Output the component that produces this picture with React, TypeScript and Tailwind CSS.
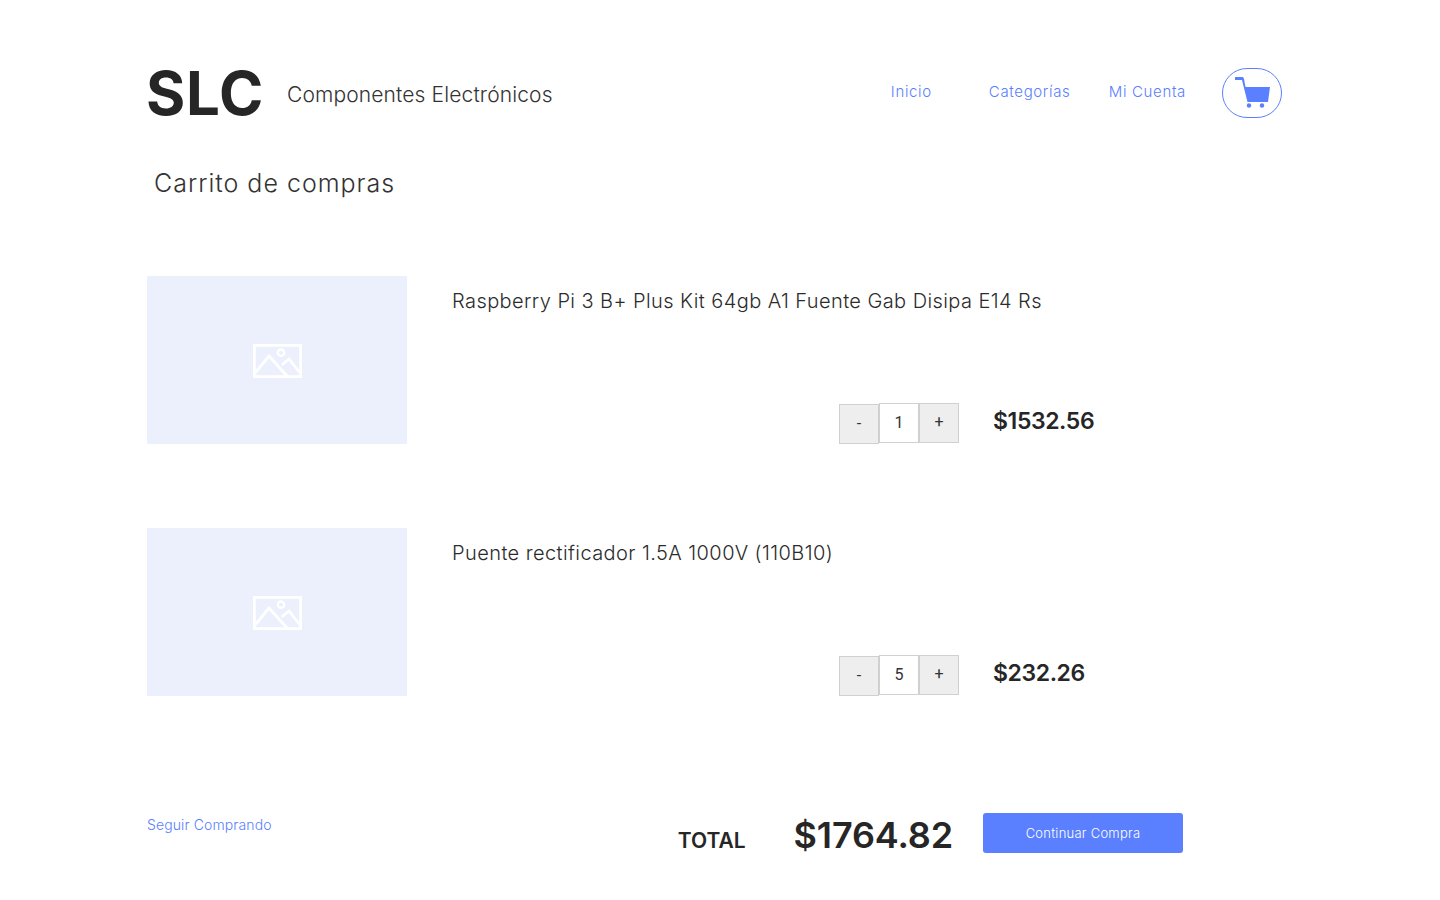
import React from "react";

type CartItem = {
  name: string;
  qty: number;
  price: string;
};

const items: CartItem[] = [
  { name: "Raspberry Pi 3 B+ Plus Kit 64gb A1 Fuente Gab Disipa E14 Rs", qty: 1, price: "$1532.56" },
  { name: "Puente rectificador 1.5A 1000V (110B10)", qty: 5, price: "$232.26" },
];

function CartIcon() {
  return (
    <svg width="38" height="34" viewBox="0 0 38 34" fill="#5a7fff">
      <path d="M2 1h8l1 2 1.500 8H37l-2 15H14.500L9 4H2z" />
      <circle cx="16" cy="29.500" r="2.200" />
      <circle cx="29" cy="29.500" r="2.200" />
    </svg>
  );
}

function PictureIcon() {
  return (
    <svg width="49" height="34" viewBox="0 0 49 34" fill="none" stroke="#ffffff">
      <rect x="1.400" y="1.400" width="46.200" height="31.200" strokeWidth="2.800" />
      <circle cx="28" cy="8.700" r="3.200" strokeWidth="2.400" />
      <path d="M2 29 16 12 34 32" strokeWidth="2.800" />
      <path d="M28.700 21 36 15 47 29" strokeWidth="2.800" />
    </svg>
  );
}

function QtyControl({ qty }: { qty: number }) {
  return (
    <div className="flex items-start font-['Roboto',sans-serif] text-[16px] text-[#333333]">
      <button className="mt-px flex h-10 w-10 items-center justify-center border border-[#d0d0d0] bg-[#eeeeee]">-</button>
      <div className="flex h-10 w-10 items-center justify-center border border-[#d0d0d0] bg-white">{qty}</div>
      <button className="flex h-10 w-10 items-center justify-center border border-[#d0d0d0] bg-[#eeeeee] pb-[2px]">+</button>
    </div>
  );
}

function CartRow({ item }: { item: CartItem }) {
  return (
    <div className="flex h-[168px]">
      <div className="flex h-[168px] w-[260px] items-center justify-center bg-[#ecf0fd] pt-[2px] pl-[1px]">
        <PictureIcon />
      </div>
      <div className="ml-[45px] flex flex-col">
        <p className="mt-[12px] h-[26px] text-[20px] leading-[26px] font-light tracking-[0.42px] whitespace-nowrap text-[#2b2b2b]">
          {item.name}
        </p>
        <div className="mt-[89px] ml-[387px] flex">
          <QtyControl qty={item.qty} />
          <span className="mt-[2px] ml-[34px] text-[23px] leading-[32px] font-semibold tracking-[-0.4px] text-[#262626]">{item.price}</span>
        </div>
      </div>
    </div>
  );
}

export default function App() {
  return (
    <div className="min-h-[900px] bg-white pt-[68px] pl-[147px] font-['Inter',sans-serif]">
      <header className="flex h-[50px] w-[1135px] items-center">
        <h1 className="-ml-px text-[60px] leading-[50px] font-bold tracking-[0.7px] text-[#262626]">SLC</h1>
        <span className="mt-[4px] ml-[23px] text-[21px] font-light tracking-[0.13px] text-[#333333]">Componentes Electrónicos</span>
        <nav className="mb-[2px] ml-auto flex text-[15px] font-light tracking-[0.65px] text-[#5a7fff]">
          <a className="w-[98px]">Inicio</a>
          <a className="w-[120px]">Categorías</a>
          <a>Mi Cuenta</a>
        </nav>
        <div className="ml-[36px] flex h-[50px] w-[60px] items-center justify-center rounded-[25px] border border-[#5a7fff]">
          <CartIcon />
        </div>
      </header>

      <h2 className="mt-[48px] ml-[7px] text-[25px] leading-[34px] font-light tracking-[1px] text-[#333333]">Carrito de compras</h2>

      <div className="mt-[76px] flex flex-col gap-[84px]">
        {items.map((item) => (
          <CartRow key={item.name} item={item} />
        ))}
      </div>

      <footer className="mt-[117px] flex h-[40px] w-[1036px]">
        <a className="mt-[3px] text-[14px] leading-[18px] font-light tracking-[0.12px] text-[#5a7fff]">Seguir Comprando</a>
        <div className="ml-auto flex">
          <span className="mt-[16px] text-[21px] leading-[24px] font-semibold text-[#262626]">TOTAL</span>
          <span className="mt-[1px] ml-[48px] text-[36px] leading-[42px] font-semibold tracking-[-0.15px] text-[#262626]">$1764.82</span>
          <button className="ml-[30px] h-10 w-[200px] rounded-[3px] bg-[#5a7fff] pt-[2px] text-[13px] font-light tracking-[0.25px] text-white">Continuar Compra</button>
        </div>
      </footer>
    </div>
  );
}
